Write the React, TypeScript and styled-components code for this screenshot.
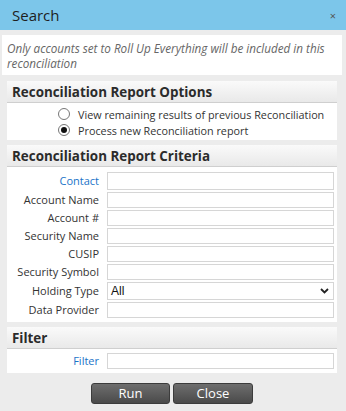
import React from "react";
import styled, { createGlobalStyle } from "styled-components";

const Global = createGlobalStyle`
  html, body { margin: 0; padding: 0; }
  body { font-family: "Open Sans", "DejaVu Sans", sans-serif; color: #333; }
  * { box-sizing: border-box; }
`;

const Window = styled.div`
  width: 346px;
  height: 411px;
  display: flex;
  flex-direction: column;
  background: #ececec;
  overflow: hidden;
`;

const TitleBar = styled.div`
  height: 30px;
  flex: none;
  background: #7cc6ea;
  display: flex;
  align-items: center;
  justify-content: space-between;
  padding: 0 12px 0 12px;
`;

const Title = styled.span`
  font-size: 15px;
  color: #1e1e1e;
`;

const CloseX = styled.span`
  font-size: 11px;
  color: #555;
  margin-right: -2px;
`;

const Content = styled.div`
  padding: 5px 4px 0 2px;
  display: flex;
  flex-direction: column;
`;

const Note = styled.div`
  background: #fff;
  height: 40px;
  padding: 6px 5px 4px 5px;
  font-size: 11.7px;
  line-height: 15px;
  font-style: italic;
  color: #666;
`;

const Section = styled.div<{ $top: number }>`
  margin: ${(p) => p.$top}px 5px 0 5px;
  background: #fff;
`;

const SectionHeader = styled.div`
  height: 22px;
  padding-left: 5px;
  display: flex;
  align-items: center;
  font-weight: 700;
  font-size: 13.4px;
  color: #2b2b2b;
  background: linear-gradient(#fafafa, #e9e9e9);
  border-bottom: 1px solid #cfcfcf;
`;

const OptionsBody = styled.div`
  padding: 3px 0 2px 51px;
  display: flex;
  flex-direction: column;
`;

const RadioRow = styled.label`
  height: 16px;
  display: flex;
  align-items: center;
  gap: 8px;
  font-size: 10.8px;
  color: #333;
`;

const RadioCircle = styled.span<{ $checked?: boolean }>`
  width: 12px;
  height: 12px;
  flex: none;
  border-radius: 50%;
  border: 1px solid #777;
  background: #fff;
  display: flex;
  align-items: center;
  justify-content: center;
  &::after {
    content: "";
    display: ${(p) => (p.$checked ? "block" : "none")};
    width: 6px;
    height: 6px;
    border-radius: 50%;
    background: #111;
  }
`;

const FormGrid = styled.div<{ $pt: number; $pb: number }>`
  display: grid;
  grid-template-columns: 92px 1fr;
  column-gap: 8px;
  row-gap: 2px;
  align-items: center;
  padding: ${(p) => p.$pt}px 3px ${(p) => p.$pb}px 0;
`;

const Label = styled.span<{ $link?: boolean }>`
  text-align: right;
  font-size: 11px;
  line-height: 16px;
  white-space: nowrap;
  color: ${(p) => (p.$link ? "#1a73c8" : "#333")};
`;

const Input = styled.div<{ $h?: number }>`
  height: ${(p) => p.$h ?? 16}px;
  border: 1px solid #d6d6d6;
  background: #fff;
`;

const Select = styled.div`
  height: 18px;
  border: 1px solid #d6d6d6;
  background: #fff;
  display: flex;
  align-items: center;
  justify-content: space-between;
  padding: 0 4px 0 3px;
  font-family: "Liberation Sans", Arial, sans-serif;
  font-size: 12px;
  line-height: 16px;
  color: #111;
`;

const Buttons = styled.div`
  display: flex;
  justify-content: center;
  gap: 3px;
  margin-top: 10px;
`;

const Button = styled.button<{ $w: number }>`
  width: ${(p) => p.$w}px;
  height: 21px;
  border: 1px solid #3c3c3c;
  border-radius: 3px;
  background: linear-gradient(#6e6e6e, #4a4a4a);
  color: #fff;
  font-family: "Open Sans", sans-serif;
  font-size: 13px;
  padding: 0;
  line-height: 19px;
`;

const Chevron = () => (
  <svg width="9" height="6" viewBox="0 0 9 6">
    <path d="M1 1 L4.5 4.5 L8 1" fill="none" stroke="#222" strokeWidth="1.8" />
  </svg>
);

const fields = ["Account Name", "Account #", "Security Name", "CUSIP", "Security Symbol"];

export default function App() {
  return (
    <Window>
      <Global />
      <TitleBar>
        <Title>Search</Title>
        <CloseX>×</CloseX>
      </TitleBar>
      <Content>
        <Note>Only accounts set to Roll Up Everything will be included in this reconciliation</Note>
        <Section $top={6}>
          <SectionHeader>Reconciliation Report Options</SectionHeader>
          <OptionsBody>
            <RadioRow>
              <RadioCircle />
              View remaining results of previous Reconciliation
            </RadioRow>
            <RadioRow>
              <RadioCircle $checked />
              Process new Reconciliation report
            </RadioRow>
          </OptionsBody>
        </Section>
        <Section $top={5}>
          <SectionHeader>Reconciliation Report Criteria</SectionHeader>
          <FormGrid $pt={5} $pb={4}>
            <Label $link>Contact</Label>
            <Input $h={18} />
            {fields.map((f) => (
              <React.Fragment key={f}>
                <Label>{f}</Label>
                <Input />
              </React.Fragment>
            ))}
            <Label>Holding Type</Label>
            <Select>
              All
              <Chevron />
            </Select>
            <Label>Data Provider</Label>
            <Input />
          </FormGrid>
        </Section>
        <Section $top={5}>
          <SectionHeader>Filter</SectionHeader>
          <FormGrid $pt={4} $pb={4}>
            <Label $link>Filter</Label>
            <Input />
          </FormGrid>
        </Section>
        <Buttons>
          <Button $w={79}>Run</Button>
          <Button $w={80}>Close</Button>
        </Buttons>
      </Content>
    </Window>
  );
}
